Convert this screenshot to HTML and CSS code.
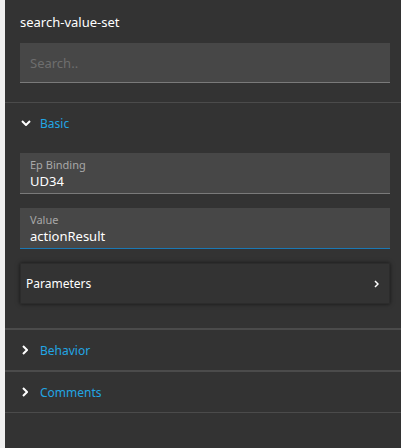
FILE: index.html
```html
<!DOCTYPE html>
<html>
<head>
<meta charset="utf-8">
<link rel="stylesheet" href="styles.css">
</head>
<body>
<div class="panel">
  <div class="head">
    <div class="title">search-value-set</div>
    <div class="search">Search..</div>
  </div>
  <div class="section">
    <div class="sec-head">
      <svg class="chev-down" width="10" height="6" viewBox="0 0 10 6"><path d="M1 1 L5 5 L9 1" fill="none" stroke="#fff" stroke-width="2"/></svg>
      <span class="sec-title">Basic</span>
    </div>
    <div class="sec-body">
      <div class="field">
        <div class="label">Ep Binding</div>
        <div class="value">UD34</div>
      </div>
      <div class="field active">
        <div class="label">Value</div>
        <div class="value">actionResult</div>
      </div>
      <div class="card">
        <span class="card-title">Parameters</span>
        <svg class="chev-small" width="5" height="8" viewBox="0 0 5 8"><path d="M1 1 L4 4 L1 7" fill="none" stroke="#fff" stroke-width="1.5"/></svg>
      </div>
    </div>
  </div>
  <div class="section">
    <div class="sec-head">
      <svg class="chev-right" width="6" height="10" viewBox="0 0 6 10"><path d="M1 1 L5 5 L1 9" fill="none" stroke="#fff" stroke-width="2"/></svg>
      <span class="sec-title">Behavior</span>
    </div>
  </div>
  <div class="section last">
    <div class="sec-head">
      <svg class="chev-right" width="6" height="10" viewBox="0 0 6 10"><path d="M1 1 L5 5 L1 9" fill="none" stroke="#fff" stroke-width="2"/></svg>
      <span class="sec-title">Comments</span>
    </div>
  </div>
</div>
</body>
</html>
```

FILE: styles.css
```css
html, body {
  margin: 0;
  padding: 0;
  background: #f0f0f0;
}
body {
  font-family: "Noto Sans", "Open Sans", sans-serif;
}
.panel {
  margin-left: 5px;
  background: #333333;
  height: 448px;
  color: #fff;
}
.head {
  padding: 12px 11px 19px 15px;
  border-bottom: 1px solid #4b4b4b;
}
.title {
  font-size: 13px;
  line-height: 20px;
  height: 20px;
}
.search {
  margin-top: 11px;
  height: 40px;
  box-sizing: border-box;
  background: #474747;
  border-bottom: 1px solid #7a7a7a;
  padding-left: 10px;
  font-size: 13px;
  line-height: 40px;
  color: #6e6e6e;
}
.section {
  border-bottom: 1px solid #4b4b4b;
}
.section + .section {
  border-top: 1px solid #4b4b4b;
}
.sec-head {
  height: 40px;
  display: flex;
  align-items: center;
  padding-left: 16px;
}
.sec-head svg {
  display: block;
}
.chev-down {
  margin-right: 9px;
}
.chev-right {
  margin-left: 1px;
  margin-right: 12px;
}
.sec-title {
  font-size: 12px;
  color: #22a6e4;
}
.sec-body {
  padding: 10px 11px 24px 15px;
}
.field {
  height: 41px;
  box-sizing: border-box;
  background: #474747;
  border-bottom: 1px solid #7a7a7a;
  padding: 5px 10px 0;
  margin-bottom: 14px;
}
.field.active {
  border-bottom-color: #1b78b4;
}
.label {
  font-size: 11px;
  line-height: 14px;
  color: #a8a8a8;
}
.value {
  font-size: 13px;
  line-height: 18px;
  color: #fff;
}
.card {
  height: 41px;
  box-sizing: border-box;
  background: #333333;
  box-shadow: 0 0 4px rgba(0, 0, 0, 0.6);
  border: 1px solid #2c2c2c;
  display: flex;
  align-items: center;
  justify-content: space-between;
  padding: 0 10px 0 5px;
}
.card-title {
  font-size: 12px;
}
.chev-small {
  display: block;
}
```
